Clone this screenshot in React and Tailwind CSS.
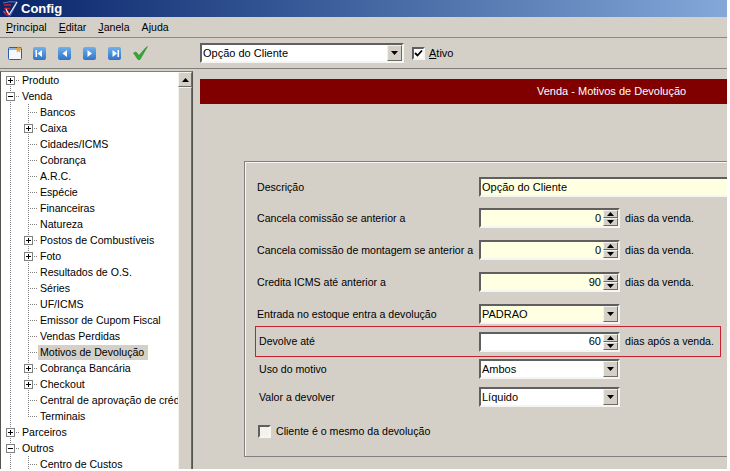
import React from 'react';

const treeRows = [
  { level: 0, label: 'Produto', box: '+', noTop: true },
  { level: 0, label: 'Venda', box: '-' },
  { level: 1, label: 'Bancos' },
  { level: 1, label: 'Caixa', box: '+' },
  { level: 1, label: 'Cidades/ICMS' },
  { level: 1, label: 'Cobrança' },
  { level: 1, label: 'A.R.C.' },
  { level: 1, label: 'Espécie' },
  { level: 1, label: 'Financeiras' },
  { level: 1, label: 'Natureza' },
  { level: 1, label: 'Postos de Combustíveis', box: '+' },
  { level: 1, label: 'Foto', box: '+' },
  { level: 1, label: 'Resultados de O.S.' },
  { level: 1, label: 'Séries' },
  { level: 1, label: 'UF/ICMS' },
  { level: 1, label: 'Emissor de Cupom Fiscal' },
  { level: 1, label: 'Vendas Perdidas' },
  { level: 1, label: 'Motivos de Devolução', selected: true },
  { level: 1, label: 'Cobrança Bancária', box: '+' },
  { level: 1, label: 'Checkout', box: '+' },
  { level: 1, label: 'Central de aprovação de crédito' },
  { level: 1, label: 'Terminais', last: true },
  { level: 0, label: 'Parceiros', box: '+' },
  { level: 0, label: 'Outros', box: '-' },
  { level: 1, label: 'Centro de Custos' },
];

function TreeGuide() {
  return (
    <svg width="18" height="16" className="shrink-0" shapeRendering="crispEdges">
      <line x1="9.5" y1="0" x2="9.5" y2="16" stroke="#808080" strokeDasharray="1 1" />
    </svg>
  );
}

function TreeNode({ box, last, noTop }) {
  return (
    <svg width="18" height="16" className="shrink-0" shapeRendering="crispEdges">
      <line x1="9.5" y1={noTop ? 8 : 0} x2="9.5" y2={last ? 8 : 16} stroke="#808080" strokeDasharray="1 1" />
      <line x1="9" y1="8.5" x2="18" y2="8.5" stroke="#808080" strokeDasharray="1 1" />
      {box && (
        <g>
          <rect x="5.5" y="4.5" width="8" height="8" fill="#fff" stroke="#808080" />
          <line x1="7" y1="8.5" x2="12" y2="8.5" stroke="#000" />
          {box === '+' && <line x1="9.5" y1="6" x2="9.5" y2="11" stroke="#000" />}
        </g>
      )}
    </svg>
  );
}

function TreeRow({ level, label, box, last, noTop, selected }) {
  return (
    <div className="flex h-4 items-center whitespace-nowrap">
      {level === 1 && <TreeGuide />}
      <TreeNode box={box} last={last} noTop={noTop} />
      <span className={`ml-[1px] px-[2px] text-[10.6px] leading-[15px] ${selected ? 'bg-[#d4d0c8] pr-[4px]' : ''}`}>{label}</span>
    </div>
  );
}

function NavIcon({ dir, bar }) {
  const tri = dir === 'left' ? 'M9 3 L4.5 6.5 L9 10 Z' : 'M4.5 3 L9 6.5 L4.5 10 Z';
  return (
    <svg width="13" height="13" viewBox="0 0 13 13" className="shrink-0">
      <defs>
        <linearGradient id={`nav-${dir}-${bar ? 'b' : 'n'}`} x1="0" y1="0" x2="0" y2="1">
          <stop offset="0" stopColor="#6fb0ee" />
          <stop offset="1" stopColor="#2f74c8" />
        </linearGradient>
      </defs>
      <rect x="0" y="0" width="13" height="13" rx="2" fill={`url(#nav-${dir}-${bar ? 'b' : 'n'})`} />
      <path d={tri} fill="#fff" />
      {bar && <rect x={dir === 'left' ? 2.5 : 9.5} y="3" width="1.5" height="7" fill="#fff" />}
    </svg>
  );
}

function NewDocIcon() {
  return (
    <svg width="15" height="14" viewBox="0 0 15 14" className="shrink-0">
      <rect x="0.5" y="1.5" width="13" height="12" rx="1" fill="#f4f7fc" stroke="#2a5cb0" />
      <rect x="1" y="2" width="12" height="2" fill="#8fb4e6" />
      <path d="M10.5 0 L11.5 2 L14 2.5 L12 4 L12.5 6.5 L10.5 5.2 L8.5 6.5 L9 4 L7 2.5 L9.5 2 Z" fill="#e8a33c" />
    </svg>
  );
}

function CheckIcon() {
  return (
    <svg width="15" height="14" viewBox="0 0 15 14" className="shrink-0">
      <path d="M0.5 7 L3 6 L6 9.5 L12.5 2 L14.5 0.5 L7 13.5 L5 13.5 Z" fill="#34a834" stroke="#1b7a1b" strokeWidth="0.5" />
    </svg>
  );
}

function TitleLogo() {
  return (
    <svg width="16" height="16" viewBox="0 0 16 16" className="shrink-0">
      <path d="M2 4 L9 4 M2 7.5 L8 7.5 M2 11 L7 11" stroke="#c8202a" strokeWidth="1.6" />
      <path d="M1 2 Q8 0 15 1 Q12 8 8 15 Q3 14 1 10" stroke="#6f8fd0" strokeWidth="0.8" fill="none" />
      <path d="M4 8 L7 14 L15 1" stroke="#e8ecf6" strokeWidth="1.3" fill="none" />
      <path d="M3 13 L8 15" stroke="#b01c30" strokeWidth="1.4" />
    </svg>
  );
}

function DownArrow() {
  return (
    <svg width="7" height="4" viewBox="0 0 7 4">
      <path d="M0 0 H7 L3.5 4 Z" fill="#000" />
    </svg>
  );
}

function UpArrow() {
  return (
    <svg width="7" height="4" viewBox="0 0 7 4">
      <path d="M0 4 H7 L3.5 0 Z" fill="#000" />
    </svg>
  );
}

const raised = 'bg-[#d4d0c8] border border-t-[#f4f2ec] border-l-[#f4f2ec] border-b-[#6b6b66] border-r-[#6b6b66]';
const sunken = 'border-2 border-t-[#5f5f5f] border-l-[#5f5f5f] border-b-[#f6f5f1] border-r-[#f6f5f1]';

function ComboButton() {
  return (
    <div className={`flex h-[16px] w-[15px] shrink-0 items-center justify-center ${raised}`}>
      <DownArrow />
    </div>
  );
}

function Select({ value, bg = 'bg-white' }) {
  return (
    <div className={`flex h-5 w-[141px] shrink-0 items-center ${sunken} ${bg}`}>
      <span className="flex-1 pl-[1px]">{value}</span>
      <ComboButton />
    </div>
  );
}

function Spin({ value, bg = 'bg-[#ffffe1]' }) {
  return (
    <div className={`flex h-5 w-[141px] shrink-0 items-center ${sunken} ${bg}`}>
      <span className="flex-1 pr-[2px] text-right">{value}</span>
      <div className="flex h-[16px] w-[15px] shrink-0 flex-col">
        <div className={`flex h-2 items-center justify-center ${raised}`}><UpArrow /></div>
        <div className={`flex h-2 items-center justify-center ${raised}`}><DownArrow /></div>
      </div>
    </div>
  );
}

function Label({ children, indent }) {
  return <div className={`shrink-0 whitespace-nowrap text-[10.6px] ${indent ? 'w-[220px]' : 'w-[222px]'}`}>{children}</div>;
}

function Suffix({ children }) {
  return <span className="ml-[5px] whitespace-nowrap text-[10.6px]">{children}</span>;
}

export default function App() {
  return (
    <div
      className="flex h-[469px] w-[727px] flex-col overflow-hidden bg-[#d4d0c8] text-[11px] leading-none text-black"
      style={{ fontFamily: '"Liberation Sans", Arial, sans-serif' }}
    >
      {/* Title bar */}
      <div className="flex h-[17px] shrink-0 items-center gap-[3px] bg-gradient-to-r from-[#0a246a] to-[#84a8d8] pl-[2px]">
        <TitleLogo />
        <span className="text-[13px] font-bold text-white">Config</span>
      </div>

      {/* Menu */}
      <div className="flex h-5 shrink-0 items-center gap-[12px] pl-[6px] text-[10.6px]">
        <span><u>P</u>rincipal</span>
        <span><u>E</u>ditar</span>
        <span><u>J</u>anela</span>
        <span>A<u>j</u>uda</span>
      </div>

      {/* Toolbar */}
      <div className="flex h-[32px] shrink-0 items-center border-y border-t-[#8a8a84] border-b-[#7f8079] pl-[8px]">
        <NewDocIcon />
        <div className="ml-[10px] flex items-center gap-[12px]">
          <NavIcon dir="left" bar />
          <NavIcon dir="left" />
          <NavIcon dir="right" />
          <NavIcon dir="right" bar />
        </div>
        <div className="ml-[12px]"><CheckIcon /></div>
        <div className={`ml-[52px] flex h-5 w-[204px] shrink-0 items-center bg-white ${sunken}`}>
          <span className="flex-1 pl-[1px]">Opção do Cliente</span>
          <ComboButton />
        </div>
        <div className={`ml-[8px] flex h-[13px] w-[13px] shrink-0 items-center justify-center bg-white ${sunken}`}>
          <svg width="9" height="9" viewBox="0 0 9 9" className="shrink-0"><path d="M1 4 L3.5 6.5 L8 1.5" stroke="#000" strokeWidth="1.8" fill="none" /></svg>
        </div>
        <span className="ml-[4px]"><u>A</u>tivo</span>
      </div>

      {/* Body */}
      <div className="flex min-h-0 flex-1 pt-[2px]">
        {/* Tree */}
        <div className="flex h-[420px] w-[193px] shrink-0 border border-r-[#55554f] border-l-[#55554f] border-t-[#808080] border-b-transparent">
          <div className="w-[177px] shrink-0 overflow-hidden bg-white">
            {treeRows.map((row) => (
              <TreeRow key={row.label} {...row} />
            ))}
          </div>
          <div className="flex w-[14px] shrink-0 flex-col bg-[#d4d0c8]">
            <div className={`flex h-[15px] shrink-0 items-center justify-center ${raised}`}><UpArrow /></div>
            <div className={`flex-1 ${raised}`} />
          </div>
        </div>

        {/* Main panel */}
        <div className="ml-[2px] min-w-0 flex-1 pt-[8px]">
          <div className="ml-[5px] flex h-[25px] items-center bg-[#800000] pl-[337px] text-white">
            Venda - Motivos de Devolução
          </div>

          {/* Group box */}
          <div className="ml-[49px] mt-[57px] h-[296px] border-y border-l border-t-[#808080] border-l-[#808080] border-b-[#808080] pt-[15px] shadow-[inset_1px_1px_0_#f6f5f1]">
            <div className="flex items-center pl-3">
              <Label>Descrição</Label>
              <div className={`flex h-5 flex-1 items-center bg-[#ffffe1] pl-[1px] ${sunken} border-r-0`}>Opção do Cliente</div>
            </div>

            <div className="mt-[11px] flex items-center pl-3">
              <Label>Cancela comissão se anterior a</Label>
              <Spin value="0" />
              <Suffix>dias da venda.</Suffix>
            </div>
            <div className="mt-3 flex items-center pl-3">
              <Label>Cancela comissão de montagem se anterior a</Label>
              <Spin value="0" />
              <Suffix>dias da venda.</Suffix>
            </div>
            <div className="mt-3 flex items-center pl-3">
              <Label>Credita ICMS até anterior a</Label>
              <Spin value="90" />
              <Suffix>dias da venda.</Suffix>
            </div>
            <div className="mt-3 flex items-center pl-3">
              <Label>Entrada no estoque entra a devolução</Label>
              <Select value="PADRAO" bg="bg-[#ffffe1]" />
            </div>

            {/* Highlighted row */}
            <div className="ml-[10px] mt-[2px] flex h-[31px] w-[466px] items-center border border-[#c8202c] pl-[3px]">
              <Label indent>Devolve até</Label>
              <Spin value="60" bg="bg-white" />
              <Suffix>dias após a venda.</Suffix>
            </div>

            <div className="mt-[2px] flex items-center pl-[14px]">
              <Label indent>Uso do motivo</Label>
              <Select value="Ambos" />
            </div>
            <div className="mt-2 flex items-center pl-[14px]">
              <Label indent>Valor a devolver</Label>
              <Select value="Líquido" />
            </div>

            <div className="mt-[18px] flex items-center pl-[13px]">
              <div className={`h-[13px] w-[13px] shrink-0 bg-[#f4f2ec] ${sunken}`} />
              <span className="ml-[5px] text-[10.6px]">Cliente é o mesmo da devolução</span>
            </div>
          </div>
        </div>
      </div>
    </div>
  );
}
